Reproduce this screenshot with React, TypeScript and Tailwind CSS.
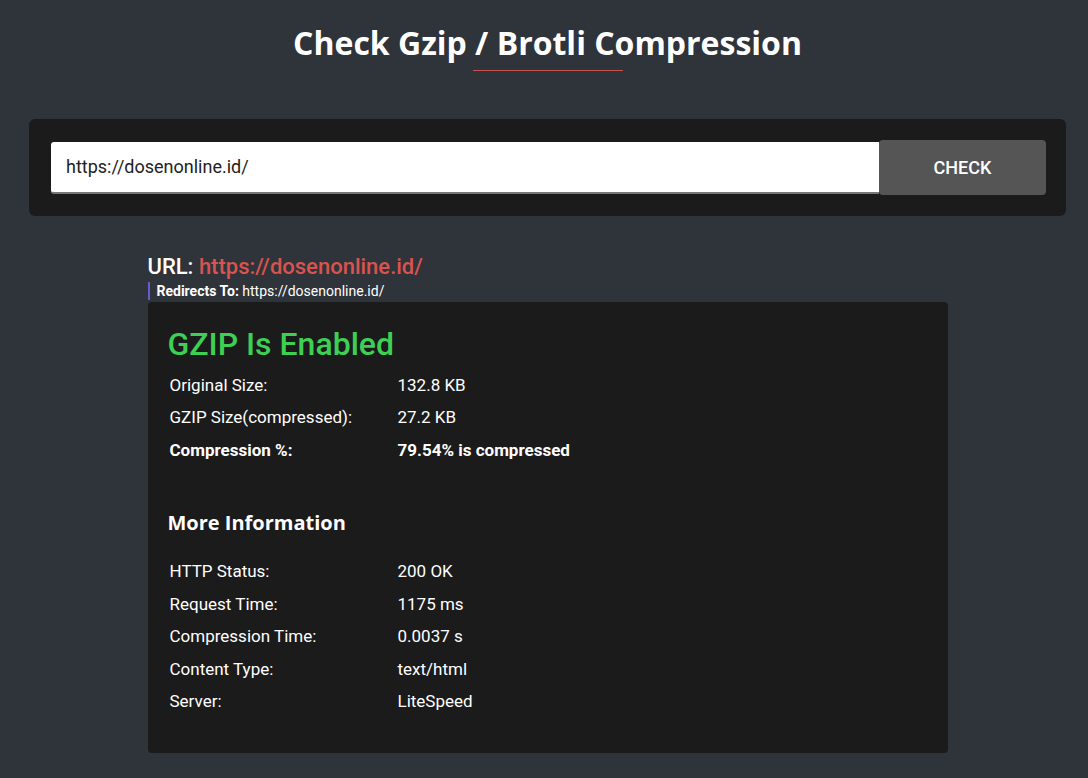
import React from "react";

const gzipRows = [
  { label: "Original Size:", value: "132.8 KB" },
  { label: "GZIP Size(compressed):", value: "27.2 KB" },
];

const infoRows = [
  { label: "HTTP Status:", value: "200 OK" },
  { label: "Request Time:", value: "1175 ms" },
  { label: "Compression Time:", value: "0.0037 s" },
  { label: "Content Type:", value: "text/html" },
  { label: "Server:", value: "LiteSpeed" },
];

const Row = ({ label, value, bold }: { label: string; value: string; bold?: boolean }) => (
  <div className={"flex h-[32.5px] items-center text-[17px] text-white " + (bold ? "font-bold" : "")}>
    <div className="w-[230px] pl-[2px]">{label}</div>
    <div>{value}</div>
  </div>
);

export default function App() {
  return (
    <div className="min-h-screen bg-[#2f333a] pl-[7px] font-['Roboto',sans-serif]">
      <div className="flex flex-col items-center pt-[22px]">
        <h1 className="font-['Open_Sans',sans-serif] text-[32px] font-bold leading-[42px] text-white">
          Check Gzip / Brotli Compression
        </h1>
        <div className="mt-[6px] h-px w-[150px] bg-[#c8524f]" />
      </div>

      <div className="mx-[22px] mt-[48px] rounded-[6px] bg-[#1b1b1b] py-[21px] pl-[22px] pr-[20px]">
        <div className="flex items-center">
          <input
            className="h-[52px] flex-1 rounded-l-[3px] border-b-2 border-[#777] bg-white px-[15px] text-[18px] text-[#222] outline-none"
            defaultValue="https://dosenonline.id/"
          />
          <button className="h-[55px] w-[167px] rounded-[4px] bg-[#555555] text-[18px] font-medium text-white">
            CHECK
          </button>
        </div>
      </div>

      <div className="mx-auto mt-[38px] w-[800px] pb-[20px]">
        <div className="text-[22px] font-medium leading-[26px] text-white">
          URL: <span className="text-[#d9534f]">https://dosenonline.id/</span>
        </div>
        <div className="mt-[2px] border-l-2 border-[#6a5acd] pl-[7px] text-[14px] leading-[18px] text-white">
          <span className="font-bold">Redirects To:</span> https://dosenonline.id/
        </div>
        <div className="mt-[2px] rounded-[4px] bg-[#1b1b1b] px-[20px] pb-[35px] pt-[24px]">
          <h2 className="text-[32px] font-medium leading-[36px] text-[#3ecf55]">GZIP Is Enabled</h2>
          <div className="mt-[7px]">
            {gzipRows.map((r) => (
              <Row key={r.label} label={r.label} value={r.value} />
            ))}
            <Row label="Compression %:" value="79.54% is compressed" bold />
          </div>
          <h3 className="mt-[43px] font-['Open_Sans',sans-serif] text-[20px] font-bold leading-[26px] text-white">
            More Information
          </h3>
          <div className="mt-[20px]">
            {infoRows.map((r) => (
              <Row key={r.label} label={r.label} value={r.value} />
            ))}
          </div>
        </div>
      </div>
    </div>
  );
}
